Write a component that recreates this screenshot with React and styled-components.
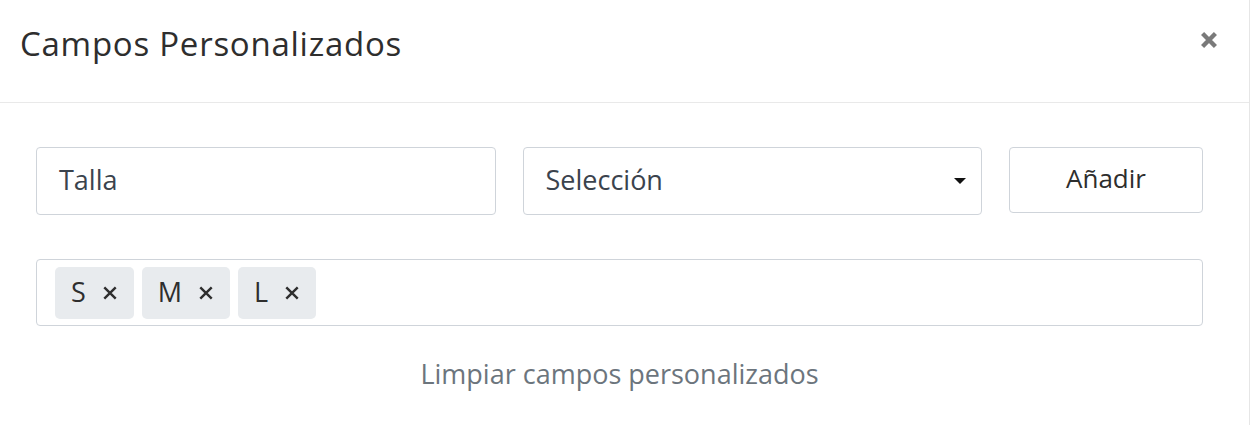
import React from "react";
import styled, { createGlobalStyle } from "styled-components";

const Global = createGlobalStyle`
  html, body { margin: 0; padding: 0; background: #fff; }
  body { font-family: "Open Sans", Lato, sans-serif; color: #333; }
  * { box-sizing: border-box; }
`;

const Modal = styled.div`
  width: 1250px;
  height: 425px;
  background: #fff;
  border-right: 1px solid #e6e6e6;
  display: flex;
  flex-direction: column;
`;

const Header = styled.div`
  height: 103px;
  border-bottom: 1px solid #e9e9e9;
  display: flex;
  justify-content: space-between;
  align-items: flex-start;
  padding: 23px 30px 0 20px;
`;

const Title = styled.h2`
  margin: 0;
  font-size: 33px;
  font-weight: 400;
  line-height: 42px;
  letter-spacing: 0.75px;
  color: #2e2e2e;
`;

const Close = styled.button`
  border: 0;
  background: none;
  padding: 0;
  margin-top: 7px;
  width: 20px;
  height: 20px;
  display: flex;
  align-items: center;
  justify-content: center;
  cursor: pointer;
`;

const Body = styled.div`
  padding: 44px 46px 0 36px;
  display: flex;
  flex-direction: column;
`;

const Row = styled.div`
  display: grid;
  grid-template-columns: 1fr 1fr 194px;
  column-gap: 27px;
  align-items: start;
`;

const Field = styled.div`
  height: 68px;
  border: 1px solid #cfd4da;
  border-radius: 4px;
  display: flex;
  align-items: center;
  justify-content: space-between;
  padding: 0 15px 4px 22px;
  font-size: 27px;
  color: #3b434d;
`;

const Caret = styled.span`
  width: 0;
  height: 0;
  margin-top: 4px;
  border-left: 6px solid transparent;
  border-right: 6px solid transparent;
  border-top: 6px solid #111;
`;

const Button = styled.button`
  height: 66px;
  border: 1px solid #cfd4da;
  border-radius: 4px;
  background: #fff;
  font-family: inherit;
  font-size: 26px;
  padding: 0 0 4px;
  color: #2e2e2e;
`;

const TagBox = styled.div`
  margin-top: 44px;
  height: 67px;
  border: 1px solid #cfd4da;
  border-radius: 4px;
  display: flex;
  align-items: center;
  gap: 8px;
  padding: 0 18px;
`;

const Chip = styled.span`
  height: 52px;
  display: inline-flex;
  align-items: center;
  gap: 16px;
  padding: 0 16px 3px;
  background: #e8ebee;
  border-radius: 5px;
  font-size: 27px;
  color: #2e2e2e;
`;

const ChipX = styled.span`
  display: inline-flex;
  margin-top: 3px;
`;

const ClearLink = styled.div`
  margin-top: 29px;
  text-align: center;
  font-size: 27px;
  color: #6c757d;
`;

const X = ({ size = 14, stroke = 2.6, color = "#333" }) => (
  <svg width={size} height={size} viewBox="0 0 14 14">
    <path d="M2 2 L12 12 M12 2 L2 12" stroke={color} strokeWidth={stroke} strokeLinecap="butt" />
  </svg>
);

export default function App() {
  return (
    <Modal>
      <Global />
      <Header>
        <Title>Campos Personalizados</Title>
        <Close aria-label="Cerrar">
          <X size={18} stroke={3.4} color="#7a7a7a" />
        </Close>
      </Header>
      <Body>
        <Row>
          <Field>Talla</Field>
          <Field>
            Selección
            <Caret />
          </Field>
          <Button>Añadir</Button>
        </Row>
        <TagBox>
          {["S", "M", "L"].map((t) => (
            <Chip key={t}>
              {t}
              <ChipX>
                <X size={16} stroke={2.1} color="#2e2e2e" />
              </ChipX>
            </Chip>
          ))}
        </TagBox>
        <ClearLink>Limpiar campos personalizados</ClearLink>
      </Body>
    </Modal>
  );
}
